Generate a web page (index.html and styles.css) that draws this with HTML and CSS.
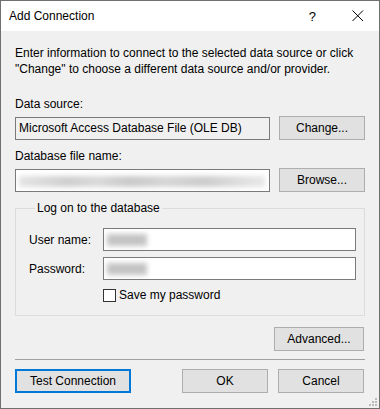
FILE: index.html
```html
<!DOCTYPE html>
<html lang="en">
<head>
    <meta charset="UTF-8">
    <title>Add Connection</title>
    <link rel="stylesheet" href="styles.css">
</head>
<body>
<div class="window">
    <div class="titlebar">
        <span class="title">Add Connection</span>
        <span class="help">?</span>
        <svg class="close" width="12" height="12" viewBox="0 0 12 12">
            <path d="M0.5 0.5 L11 11 M11 0.5 L0.5 11" stroke="#000" stroke-width="1" fill="none"/>
        </svg>
    </div>

    <div class="content">
        <p class="intro">Enter information to connect to the selected data source or click "Change" to choose a different data source and/or provider.</p>

        <div class="label">Data source:</div>
        <div class="field-row">
            <div class="textbox readonly">Microsoft Access Database File (OLE DB)</div>
            <button class="btn">Change...</button>
        </div>

        <div class="label">Database file name:</div>
        <div class="field-row">
            <div class="textbox"><span class="blob path"></span></div>
            <button class="btn">Browse...</button>
        </div>

        <fieldset class="group">
            <legend>Log on to the database</legend>
            <div class="login-grid">
                <label>User name:</label>
                <div class="textbox"><span class="blob"></span></div>
                <label>Password:</label>
                <div class="textbox"><span class="blob"></span></div>
                <span></span>
                <div class="check-row">
                    <span class="checkbox"></span>
                    <span>Save my password</span>
                </div>
            </div>
        </fieldset>

        <div class="advanced-row">
            <button class="btn wide">Advanced...</button>
        </div>

        <hr class="separator">

        <div class="footer">
            <button class="btn test default">Test Connection</button>
            <div class="footer-right">
                <button class="btn">OK</button>
                <button class="btn">Cancel</button>
            </div>
        </div>
    </div>

    <svg class="grip" width="8" height="8" viewBox="0 0 8 8">
        <rect x="6" y="0" width="2" height="2" fill="#bcbcbc"/>
        <rect x="3" y="3" width="2" height="2" fill="#bcbcbc"/>
        <rect x="6" y="3" width="2" height="2" fill="#bcbcbc"/>
        <rect x="0" y="6" width="2" height="2" fill="#bcbcbc"/>
        <rect x="3" y="6" width="2" height="2" fill="#bcbcbc"/>
        <rect x="6" y="6" width="2" height="2" fill="#bcbcbc"/>
    </svg>
</div>
</body>
</html>
```

FILE: styles.css
```css
body, html {
    margin: 0;
    padding: 0;
    background-color: #f0f0f0;
    font-family: "Liberation Sans", Arial, sans-serif;
    font-size: 12px;
    color: #000;
}
.window {
    position: relative;
    width: 380px;
    height: 409px;
    box-sizing: border-box;
    border: 1px solid #707070;
    background-color: #f0f0f0;
}
.titlebar {
    height: 30px;
    background-color: #ffffff;
    display: flex;
    align-items: center;
    padding-left: 8px;
}
.title {
    flex: 1;
    font-size: 12px;
}
.help {
    margin-right: 36px;
    font-size: 13px;
}
.close {
    margin-right: 15px;
}
.content {
    padding: 0 14px;
}
.intro {
    margin: 14px 0 0 0;
    line-height: 16px;
}
.label {
    margin-top: 19px;
    line-height: 16px;
}
.field-row + .label {
    margin-top: 8px;
}
.field-row {
    display: flex;
    align-items: center;
    justify-content: space-between;
    margin-top: 4px;
    height: 24px;
}
.textbox {
    box-sizing: border-box;
    height: 23px;
    border: 1px solid #7a7a7a;
    background-color: #ffffff;
    padding: 0 3px;
    line-height: 21px;
    overflow: hidden;
    white-space: nowrap;
}
.field-row .textbox {
    width: 255px;
}
.textbox.readonly {
    background-color: #f0f0f0;
}
.blob {
    display: inline-block;
    width: 40px;
    height: 12px;
    margin-top: 5px;
    background-color: #c4c4c4;
    filter: blur(2.5px);
}
.blob.path {
    width: 246px;
    height: 11px;
    margin-top: 6px;
    background: linear-gradient(90deg, #e4e4e4 0%, #cfcfcf 20%, #dadada 32%, #c9c9c9 45%, #d6d6d6 60%, #cccccc 75%, #dedede 90%, #e8e8e8 100%);
}
.btn {
    box-sizing: border-box;
    width: 86px;
    height: 24px;
    background-color: #e1e1e1;
    border: 1px solid #adadad;
    font-family: inherit;
    font-size: 12px;
    color: #000;
    padding: 0;
}
.btn.wide {
    width: 90px;
}
.btn.test {
    width: 116px;
}
.btn.default {
    border: 2px solid #0078d7;
}
.group {
    margin: 8px 0 0 0;
    padding: 0 8px 0 13px;
    height: 116px;
    box-sizing: border-box;
    border: 1px solid #dcdcdc;
}
.group legend {
    padding: 0 2px;
    margin-left: 6px;
    line-height: 16px;
}
.login-grid {
    display: grid;
    grid-template-columns: 74px 1fr;
    row-gap: 6px;
    align-items: center;
    margin-top: 12px;
}
.check-row {
    display: flex;
    align-items: center;
    gap: 3px;
    margin-top: 2px;
}
.checkbox {
    display: inline-block;
    box-sizing: border-box;
    width: 13px;
    height: 13px;
    border: 1px solid #333333;
    background-color: #ffffff;
}
.advanced-row {
    display: flex;
    justify-content: flex-end;
    margin-top: 11px;
    padding-right: 1px;
}
.separator {
    margin: 8px 0 0 0;
    border: none;
    border-top: 1px solid #a0a0a0;
    height: 0;
}
.footer {
    display: flex;
    justify-content: space-between;
    margin-top: 9px;
    padding-right: 1px;
}
.footer-right {
    display: flex;
    gap: 10px;
}
.grip {
    position: absolute;
    right: 2px;
    bottom: 2px;
}
```
